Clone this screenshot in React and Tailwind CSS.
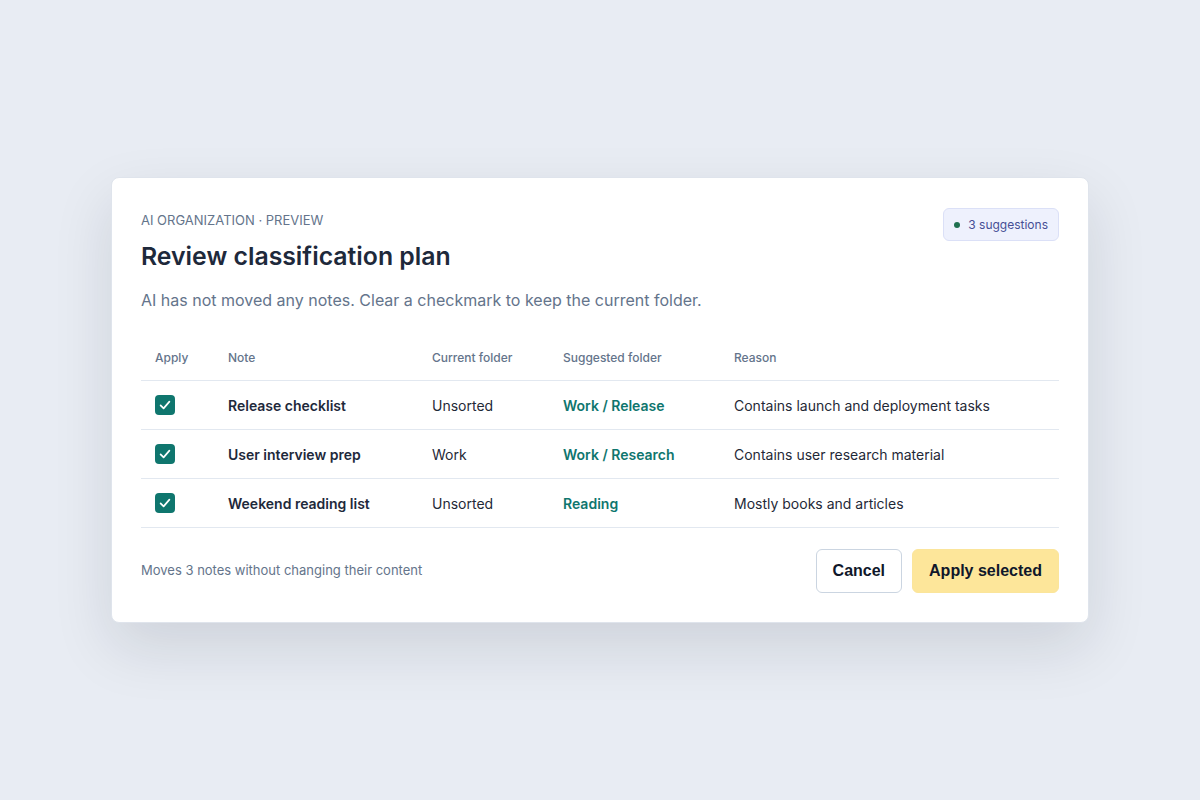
import React, { useState } from "react"

const rows = [
  { id: 1, note: "Release checklist", current: "Unsorted", suggested: "Work / Release", reason: "Contains launch and deployment tasks" },
  { id: 2, note: "User interview prep", current: "Work", suggested: "Work / Research", reason: "Contains user research material" },
  { id: 3, note: "Weekend reading list", current: "Unsorted", suggested: "Reading", reason: "Mostly books and articles" },
]

const Checkbox = ({ checked, onChange }) => (
  <button
    type="button"
    onClick={onChange}
    className={`w-5 h-5 rounded-[4px] flex items-center justify-center ${
      checked ? "bg-[#0f766e]" : "bg-white border border-[#cbd5e1]"
    }`}
  >
    {checked && (
      <svg width="20" height="20" viewBox="0 0 20 20" fill="none">
        <path d="M5.6 10.4 8.6 13.4 14.4 6.6" stroke="white" strokeWidth="1.7" strokeLinecap="round" strokeLinejoin="round" />
      </svg>
    )}
  </button>
)

const App = () => {
  const [selected, setSelected] = useState({ 1: true, 2: true, 3: true })
  const count = Object.values(selected).filter(Boolean).length

  const toggle = (id) => setSelected((prev) => ({ ...prev, [id]: !prev[id] }))

  return (
    <div className="min-h-screen bg-[#e8ecf3] flex items-center justify-center font-['Inter',sans-serif]">
      <div className="w-[978px] bg-white rounded-lg border border-[#dfe4ec] shadow-[0_24px_60px_rgba(15,23,42,0.12)] px-[29px] pt-[30px] pb-[29px]">
        <div className="flex justify-between items-start">
          <div>
            <div className="text-[13px] leading-6 uppercase text-[#64748b]">AI Organization · Preview</div>
            <h1 className="mt-[8px] text-[24.8px] leading-8 font-semibold text-[#1e293b]">Review classification plan</h1>
          </div>
          <div className="h-[33px] px-[10px] flex items-center gap-[8px] rounded-md bg-[#eef1fd] border border-[#dbe0f7] text-[12px] text-[#464f95]">
            <span className="w-[6px] h-[6px] rounded-full bg-[#1f7050]"></span>
            {count} suggestions
          </div>
        </div>

        <p className="mt-4 text-[16px] leading-6 text-[#64748b]">
          AI has not moved any notes. Clear a checkmark to keep the current folder.
        </p>

        <table className="mt-6 w-full border-collapse text-left">
          <thead>
            <tr className="border-b border-[#e2e8f0]">
              <th className="w-[73px] pl-[14px] py-[14px] text-[12px] leading-4 font-medium text-[#64748b]">Apply</th>
              <th className="w-[204px] pl-[14px] py-[14px] text-[12px] leading-4 font-medium text-[#64748b]">Note</th>
              <th className="w-[131px] pl-[14px] py-[14px] text-[12px] leading-4 font-medium text-[#64748b]">Current folder</th>
              <th className="w-[171px] pl-[14px] py-[14px] text-[12px] leading-4 font-medium text-[#64748b]">Suggested folder</th>
              <th className="pl-[14px] py-[14px] text-[12px] leading-4 font-medium text-[#64748b]">Reason</th>
            </tr>
          </thead>
          <tbody>
            {rows.map((row) => (
              <tr key={row.id} className="border-b border-[#e2e8f0] h-[49px]">
                <td className="pl-[14px]">
                  <Checkbox checked={selected[row.id]} onChange={() => toggle(row.id)} />
                </td>
                <td className="pl-[14px] text-[14px] font-semibold text-[#1e293b]">{row.note}</td>
                <td className="pl-[14px] text-[14px] text-[#1f2937]">{row.current}</td>
                <td className="pl-[14px] text-[14px] font-semibold text-[#0f766e]">{row.suggested}</td>
                <td className="pl-[14px] text-[14px] text-[#1f2937]">{row.reason}</td>
              </tr>
            ))}
          </tbody>
        </table>

        <div className="mt-[21px] flex items-center justify-between">
          <span className="text-[13px] text-[#64748b]">Moves {count} notes without changing their content</span>
          <div className="flex gap-[10px] font-['Liberation_Sans',Arial,sans-serif]">
            <button className="h-[44px] px-4 rounded-md border border-[#cbd5e1] bg-white text-[16px] font-bold text-[#0f172a]">
              Cancel
            </button>
            <button className="h-[44px] px-4 rounded-md border border-[#fbe59b] bg-[#fde69a] text-[16px] font-bold text-[#0f172a]">
              Apply selected
            </button>
          </div>
        </div>
      </div>
    </div>
  )
}

export default App
